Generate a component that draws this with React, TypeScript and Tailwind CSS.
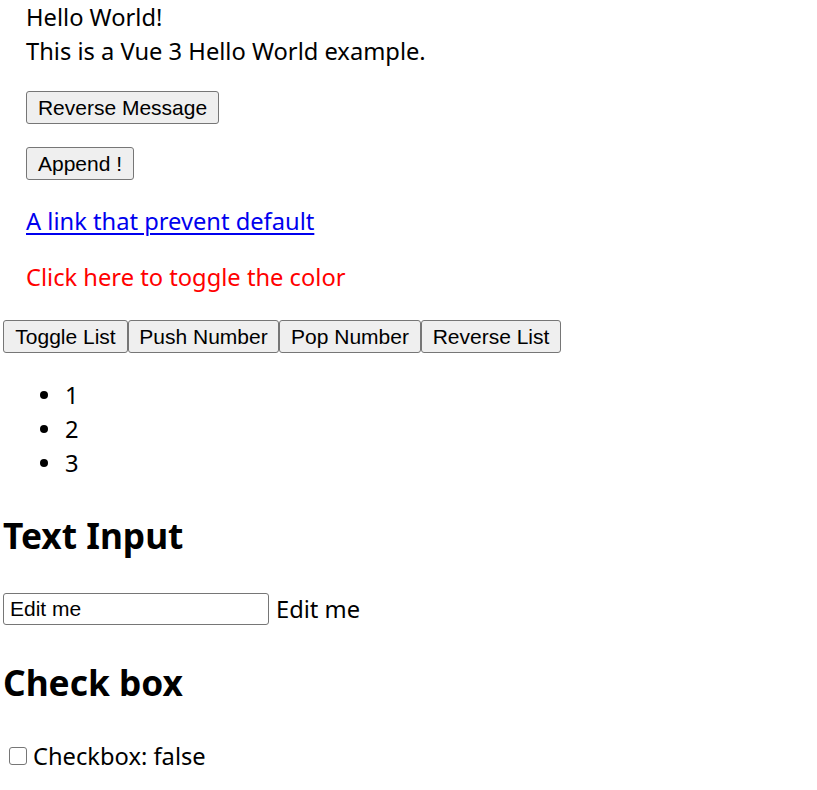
import React from "react";

const btn =
  "h-[33px] flex items-center justify-center bg-[#efefef] border border-[#767676] rounded-[3px] text-black text-[21px] leading-none [font-family:'Liberation_Sans',Arial,sans-serif]";

export default function App() {
  return (
    <div className="min-h-[790px] bg-white text-black pl-[3px] flex flex-col items-start [font-family:'Noto_Sans',sans-serif] text-[23.7px]">
      <div className="ml-[23px] flex flex-col items-start">
        <div className="h-[34px] leading-[34px]">Hello World!</div>
        <div className="h-[34px] leading-[34px]">This is a Vue 3 Hello World example.</div>
        <button className={`${btn} mt-[23px] w-[193px]`}>Reverse Message</button>
        <button className={`${btn} mt-[23px] w-[108px]`}>Append !</button>
        <a href="#" className="mt-[24px] h-[34px] leading-[34px] text-[#0000ee] underline underline-offset-[3px] decoration-[2px]">
          A link that prevent default
        </a>
        <div className="mt-[22px] h-[34px] leading-[34px] text-[#ff0000]">Click here to toggle the color</div>
      </div>

      <div className="mt-[26px] flex">
        <button className={`${btn} w-[125px]`}>Toggle List</button>
        <button className={`${btn} w-[151px]`}>Push Number</button>
        <button className={`${btn} w-[142px]`}>Pop Number</button>
        <button className={`${btn} w-[140px]`}>Reverse List</button>
      </div>

      <ul className="mt-[25px] flex flex-col">
        {[1, 2, 3].map((n) => (
          <li key={n} className="h-[34px] leading-[34px] flex items-center">
            <span className="ml-[37px] w-[8px] h-[8px] rounded-full bg-black" />
            <span className="ml-[17px]">{n}</span>
          </li>
        ))}
      </ul>

      <h2 className="mt-[31px] h-[48px] leading-[48px] text-[35.3px] font-bold">Text Input</h2>

      <div className="mt-[33px] flex items-center gap-[7px]">
        <input
          type="text"
          defaultValue="Edit me"
          className="w-[266px] h-[32px] border border-[#767676] rounded-[3px] px-[6px] text-[21px] text-black [font-family:'Liberation_Sans',Arial,sans-serif] outline-none"
        />
        <span className="leading-[34px]">Edit me</span>
      </div>

      <h2 className="mt-[32px] h-[48px] leading-[48px] text-[35.3px] font-bold">Check box</h2>

      <div className="mt-[33px] h-[34px] flex items-center">
        <input
          type="checkbox"
          className="appearance-none ml-[6px] w-[18px] h-[18px] border-[1.5px] border-[#767676] rounded-[3px] bg-white"
        />
        <span className="ml-[6px] leading-[34px]">Checkbox: false</span>
      </div>
    </div>
  );
}
